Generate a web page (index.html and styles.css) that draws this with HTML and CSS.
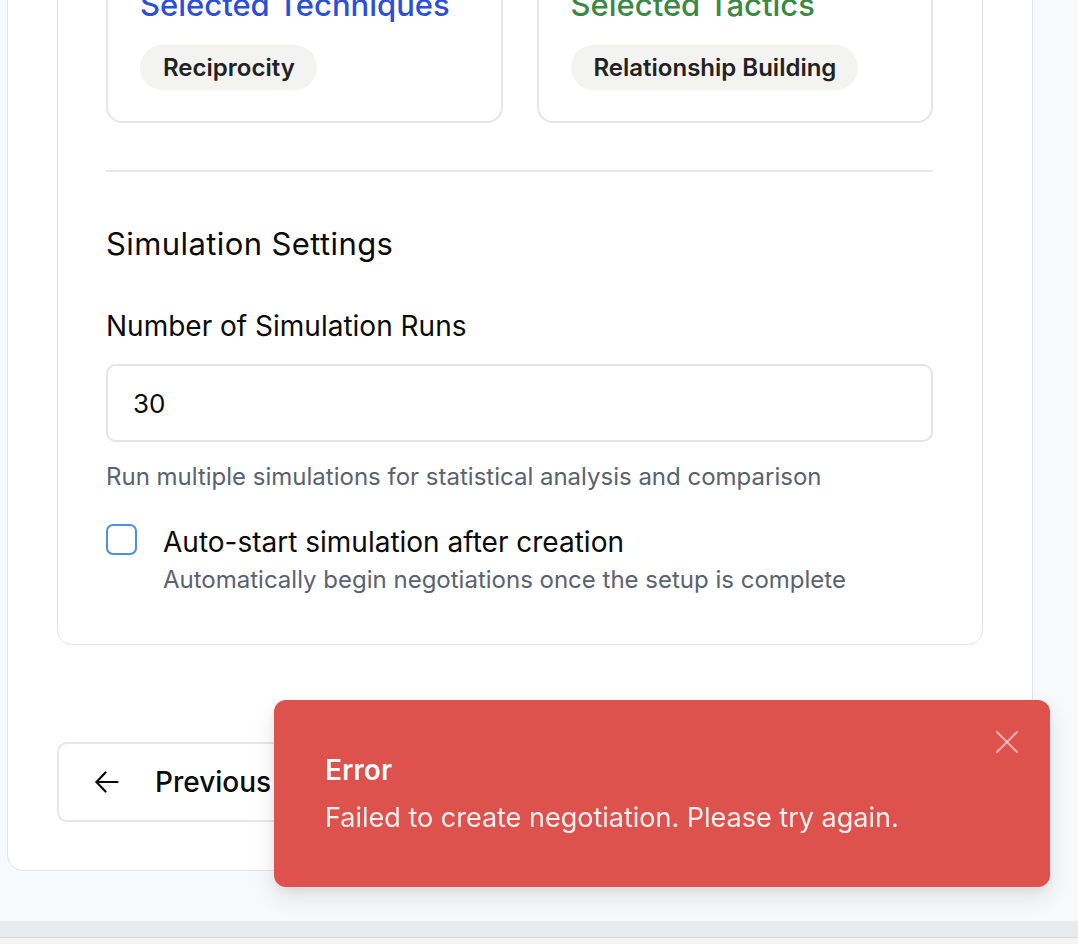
FILE: index.html
```html
<!DOCTYPE html>
<html lang="en">
<head>
<meta charset="utf-8">
<title>Create Negotiation</title>
<link rel="stylesheet" href="styles.css">
</head>
<body>
<div class="page">
  <div class="outer-card">
    <div class="inner-card">
      <div class="summary-grid">
        <div class="summary-card">
          <h3 class="summary-title blue">Selected Techniques</h3>
          <div class="chips"><span class="chip">Reciprocity</span></div>
        </div>
        <div class="summary-card">
          <h3 class="summary-title green">Selected Tactics</h3>
          <div class="chips"><span class="chip">Relationship Building</span></div>
        </div>
      </div>
      <hr class="divider">
      <h2 class="section-title">Simulation Settings</h2>
      <label class="field-label" for="runs">Number of Simulation Runs</label>
      <input class="text-input" id="runs" type="text" value="30">
      <p class="help">Run multiple simulations for statistical analysis and comparison</p>
      <div class="check-row">
        <span class="checkbox"></span>
        <div class="check-text">
          <div class="check-label">Auto-start simulation after creation</div>
          <div class="check-sub">Automatically begin negotiations once the setup is complete</div>
        </div>
      </div>
    </div>
    <div class="actions">
      <button class="btn btn-outline">
        <svg class="btn-icon" viewBox="0 0 24 24" width="24" height="24" fill="none" stroke="currentColor" stroke-width="2.2" stroke-linecap="round" stroke-linejoin="round"><path d="M22.5 12H1.5"/><path d="M10.5 21.5L1.5 12l9-9.5"/></svg>
        <span>Previous</span>
      </button>
      <button class="btn btn-primary">Create Negotiation</button>
    </div>
  </div>
  <div class="hscroll"></div>
</div>

<div class="toast">
  <div class="toast-title">Error</div>
  <div class="toast-msg">Failed to create negotiation. Please try again.</div>
  <svg class="toast-close" viewBox="0 0 24 24" width="40" height="40" fill="none" stroke="currentColor" stroke-width="1.3" stroke-linecap="round"><path d="M18 6L6 18"/><path d="M6 6l12 12"/></svg>
</div>
</body>
</html>
```

FILE: styles.css
```css
* { box-sizing: border-box; }
html, body { margin: 0; padding: 0; }
body {
  background: #f8f9fb;
  font-family: Inter, "Liberation Sans", sans-serif;
  color: #0a0a0b;
  overflow: hidden;
  height: 944px;
}
.page {
  padding-left: 7px;
  width: 1033px;
}
.outer-card {
  margin-top: -146px;
  background: #fff;
  border: 1px solid #e4e4e4;
  border-radius: 16px;
  padding: 48px 49px;
}
.inner-card {
  border: 1px solid #e4e4e4;
  border-radius: 14px;
  padding: 48px 49px 49px 48px;
}
.summary-grid {
  display: grid;
  grid-template-columns: 1fr 1fr;
  gap: 34px;
}
.summary-card {
  border: 2px solid #e6e6e6;
  border-radius: 16px;
  padding: 32px 32px 31px 32px;
}
.summary-title {
  margin: 0 0 21px 0;
  font-size: 31px;
  line-height: 38px;
  font-weight: 500;
}
.blue { color: #2c4fd8; }
.green { color: #3a8845; }
.chips { display: flex; gap: 10px; }
.chip {
  display: inline-block;
  background: #f3f3f2;
  border-radius: 999px;
  padding: 0 22px 0 23px;
  height: 45px;
  line-height: 45px;
  font-size: 24px;
  font-weight: 600;
  color: #222;
}
.divider {
  border: 0;
  border-top: 2px solid #e8e8e8;
  margin: 47px 0 0 0;
}
.section-title {
  margin: 53px 0 0 0;
  font-size: 31px;
  line-height: 38px;
  font-weight: 400;
  letter-spacing: 0.4px;
}
.field-label {
  display: block;
  margin-top: 46px;
  font-size: 28px;
  line-height: 34px;
  font-weight: 400;
}
.text-input {
  display: block;
  width: 100%;
  margin-top: 21px;
  height: 78px;
  border: 2px solid #e4e4e4;
  border-radius: 10px;
  padding: 0 25px;
  font-family: inherit;
  font-size: 26px;
  color: #0a0a0b;
  background: #fff;
  outline: none;
}
.help {
  margin: 20px 0 0 0;
  font-size: 24px;
  line-height: 30px;
  color: #5a6170;
}
.check-row {
  display: flex;
  gap: 26px;
  margin-top: 32px;
}
.checkbox {
  flex: none;
  width: 31px;
  height: 31px;
  border: 2px solid #4b8fe6;
  border-radius: 7px;
}
.check-label {
  font-size: 28px;
  line-height: 34px;
  font-weight: 400;
  margin-top: 1px;
}
.check-sub {
  margin-top: 6px;
  font-size: 24px;
  line-height: 30px;
  color: #5a6170;
}
.actions {
  display: flex;
  justify-content: space-between;
  margin-top: 97px;
}
.btn {
  font-family: inherit;
  height: 80px;
  border-radius: 10px;
  font-size: 28px;
  font-weight: 500;
  display: inline-flex;
  align-items: center;
  cursor: pointer;
}
.btn-outline {
  background: #fff;
  border: 2px solid #e6e6e6;
  color: #0a0a0b;
  padding: 0 38px 0 36px;
  gap: 36px;
}
.btn-primary {
  background: #111;
  color: #fff;
  border: 0;
  padding: 0 36px;
}
.hscroll {
  margin-top: 50px;
  height: 24px;
  background: #f4f4f4;
  border-top: 16px solid #e9eaec;
  width: 1078px;
  margin-left: -7px;
  box-shadow: inset 0 1px 0 #d9d9d9;
}
.toast {
  position: fixed;
  left: 274px;
  top: 700px;
  width: 776px;
  height: 187px;
  background: #de524d;
  border-radius: 12px;
  padding: 52px 51px 0 51px;
  box-shadow: 0 10px 24px rgba(0,0,0,0.10), 0 4px 8px rgba(0,0,0,0.06);
  color: #fff;
}
.toast-title {
  font-size: 28px;
  line-height: 36px;
  font-weight: 600;
}
.toast-msg {
  margin-top: 12px;
  font-size: 27px;
  line-height: 36px;
  color: rgba(255,255,255,0.92);
}
.toast-close {
  position: absolute;
  right: 23px;
  top: 22px;
  color: rgba(255,255,255,0.5);
}
```
